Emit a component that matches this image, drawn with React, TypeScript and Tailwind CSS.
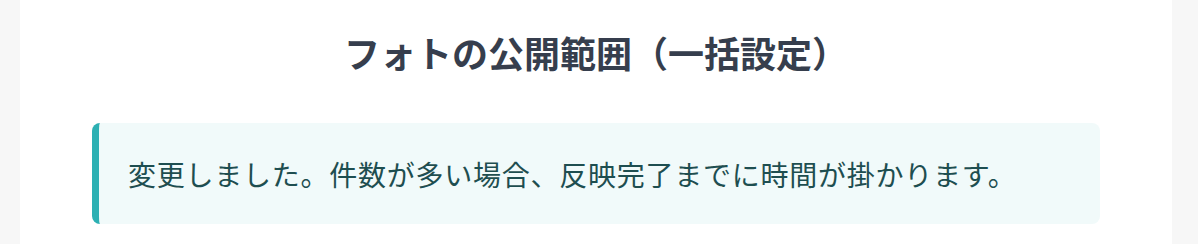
import React from "react";

export default function App() {
  return (
    <div className="flex h-[244px] w-full bg-[#f7f7f7]" style={{ fontFamily: '"Noto Sans CJK JP", "Noto Sans", sans-serif' }}>
      <div className="ml-[20px] w-[1152px] bg-white">
        <h1 className="pt-[25px] text-center text-[36px] leading-[54px] font-bold text-[#363e4d]">
          フォトの公開範囲（一括設定）
        </h1>
        <div className="mx-[72px] mt-[44px] flex h-[101px] items-center rounded-lg border-l-[7px] border-[#2cb0b3] bg-[#f1fafa] pl-[29px]">
          <p className="text-[28px] leading-[40px] tracking-[0.75px] text-[#1e4e50]">
            変更しました。件数が多い場合、反映完了までに時間が掛かります。
          </p>
        </div>
      </div>
    </div>
  );
}
